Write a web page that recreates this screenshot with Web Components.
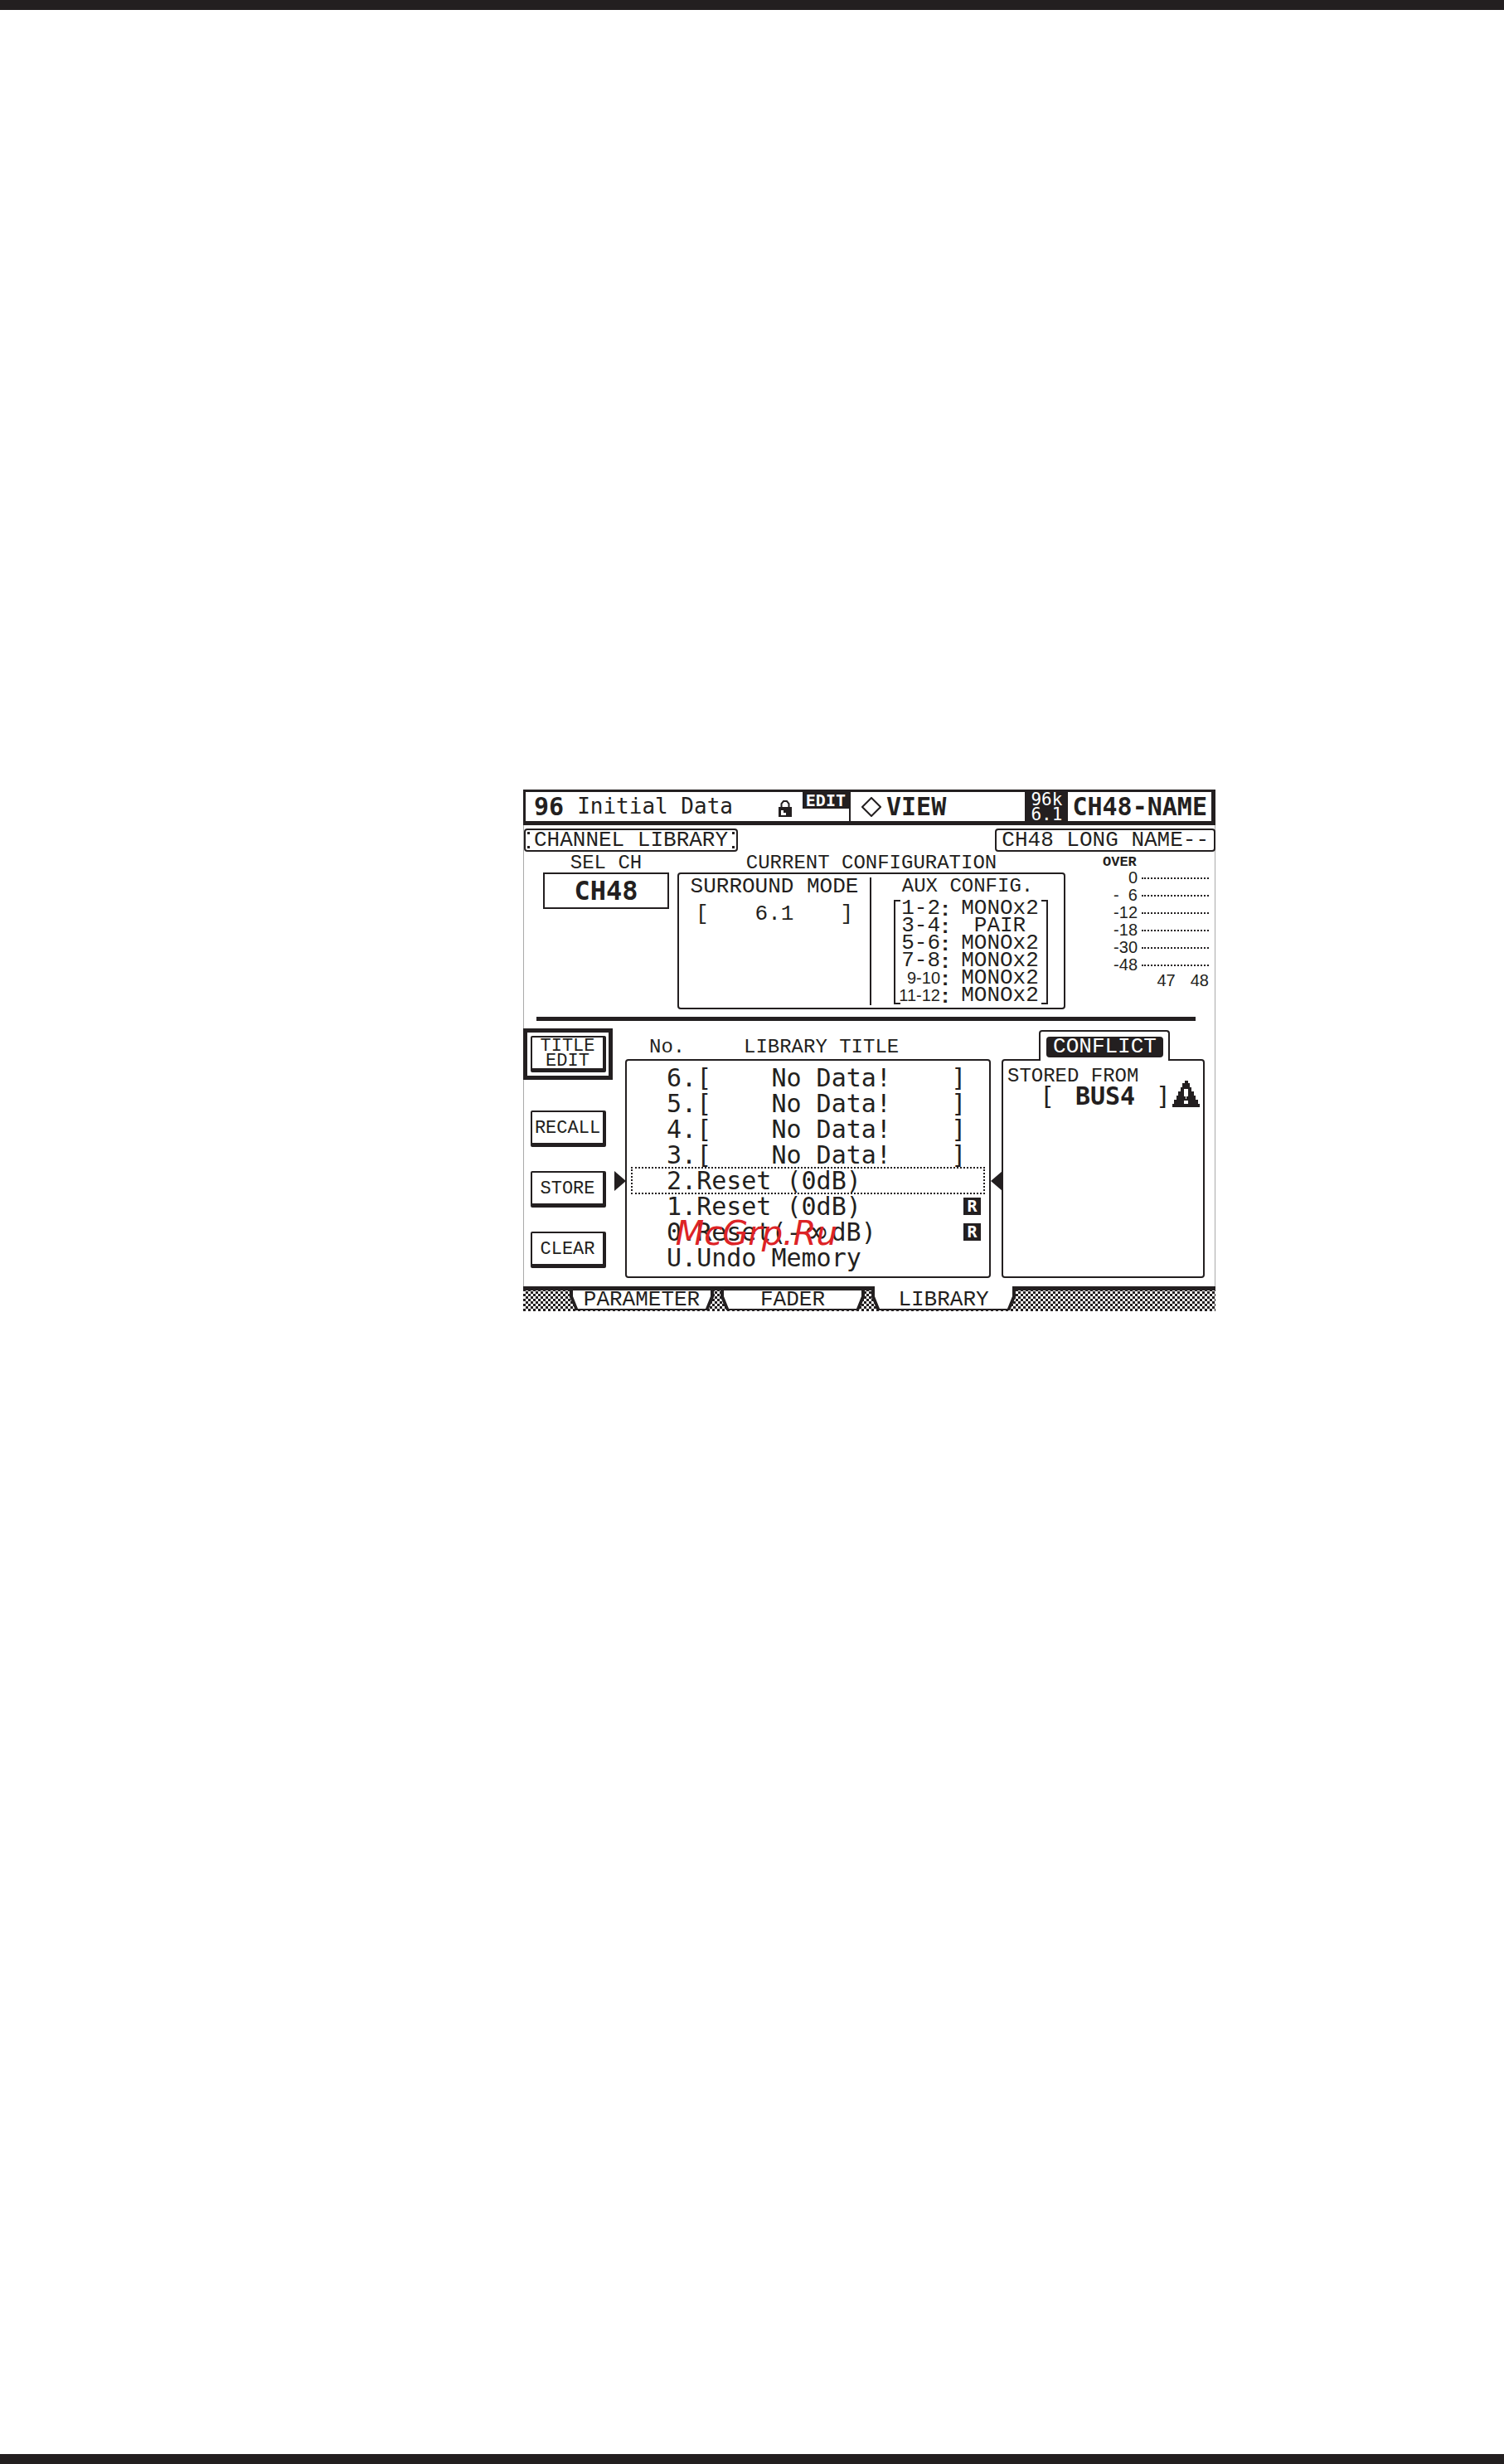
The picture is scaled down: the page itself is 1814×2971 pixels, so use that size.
<!DOCTYPE html>
<html lang="en">
<head>
<meta charset="utf-8">
<title>Channel Library</title>
<style>
html{--ink:#231f20;--paper:#fff;--lcd:"DejaVu Sans Mono",monospace;--label:"Liberation Mono",monospace}
body{margin:0;background:#fff;color:var(--ink);font-family:var(--lcd)}
</style>
</head>
<body>
<manual-page><lcd-screen></lcd-screen></manual-page>
<script>
function element(name, html) {
  const t = document.createElement('template');
  t.innerHTML = '<style>*{box-sizing:border-box}:host{display:block;box-sizing:border-box}</style>' + html;
  customElements.define(name, class extends HTMLElement {
    constructor() {
      super();
      this.attachShadow({mode: 'open'}).append(t.content.cloneNode(true));
    }
  });
}

element('manual-page', `
<style>
:host{display:grid;min-height:100vh;grid-template-columns:631fr 835fr 348fr;grid-template-rows:12px 940fr auto 1378fr 12px}
.rule{grid-column:1/-1;background:var(--ink)}
.top{grid-row:1}.bottom{grid-row:5}
main{grid-column:2;grid-row:3;min-width:0}
</style>
<div class="rule top"></div><main><slot></slot></main><div class="rule bottom"></div>`);

element('lcd-header', `
<style>
:host{display:flex;height:43px;border:solid var(--ink);border-width:3px 5px 5px 3px;line-height:35px;white-space:pre}
.scene{display:flex;flex:none;width:47.4%;border-right:2px solid var(--ink);padding-left:10px}
b{font-size:30px}
.name{font-size:26px;padding-left:16px;flex:1}
.lock{margin:9px 13px 0 0;width:16px;height:22px}
.edit{font-size:20px;font-weight:bold;line-height:20px;height:20px;background:var(--ink);color:var(--paper);padding:0 4px}
.view{flex:1;display:flex;padding-left:13px;align-items:center}
.view svg{width:24px;height:24px;margin-right:6px}
.rate{background:var(--ink);color:var(--paper);font-size:21px;line-height:18px;width:52px;text-align:center}
.ch{padding:0 5px}
</style>
<div class="scene"><b>96</b><span class="name">Initial Data</span>
<svg class="lock" viewBox="0 0 16 22"><path d="M3.500 9V5L6 2h4l2.500 3v4" fill="none" stroke="#231f20" stroke-width="2"/><path d="M0 9h16v12H0z" fill="#231f20"/><path d="M3 13h3v3h3v3H3z" fill="#fff"/></svg><span class="edit">EDIT</span></div>
<div class="view"><svg viewBox="0 0 24 24"><path d="M12 1L23 12L12 23L1 12z" fill="none" stroke="#231f20" stroke-width="2"/></svg><b>VIEW</b></div>
<div class="rate">96k<br>6.1</div><b class="ch">CH48-NAME</b>`);

element('name-tag', `
<style>
:host{border:2px solid var(--ink);border-radius:4px;height:28px;font:26px/24px var(--label);padding:0 4px;display:flex;gap:2px;white-space:pre}
:host([dotted]) i{width:3px;margin:2px 0;border:solid var(--ink);border-width:3px 0}
:host([dotted]){padding:0 2px;gap:5px}
</style><i></i><slot></slot><i></i>`);

element('aux-config', `
<style>
:host{position:relative;padding:0 4px;width:186px}
:host::before,:host::after{content:"";position:absolute;top:0;bottom:0;width:6px;border:2px solid var(--ink)}
:host::before{left:0;border-right:0}
:host::after{right:0;border-left:0}
table{border-collapse:collapse;width:100%;font:26px/21px var(--label)}
th,td{padding:0;height:21px;font-weight:normal;white-space:pre}
th{text-align:right;width:64px}
td{text-align:center;padding-left:6px}
.dense{font:20px/21px "Liberation Sans",sans-serif}
b{display:inline-block;width:12px;height:21px;vertical-align:top;text-align:center;font:bold 26px/21px "Liberation Sans",sans-serif}
</style>
<table>
<tr><th scope="row">1-2<b>:</b></th><td>MONOx2</td></tr>
<tr><th scope="row">3-4<b>:</b></th><td>PAIR</td></tr>
<tr><th scope="row">5-6<b>:</b></th><td>MONOx2</td></tr>
<tr><th scope="row">7-8<b>:</b></th><td>MONOx2</td></tr>
<tr><th scope="row" class="dense">9-10<b>:</b></th><td>MONOx2</td></tr>
<tr><th scope="row" class="dense">11-12<b>:</b></th><td>MONOx2</td></tr>
</table>`);

element('level-meter', `
<style>
:host{width:128px;font:20px/21px "Liberation Sans",sans-serif}
.over{font:bold 17px/20px var(--label);height:18px;width:42px}
.row{display:flex;align-items:center;height:21px;gap:5px;white-space:pre}
.row span{width:42px;text-align:right}
.row i{flex:1;border-top:2px dotted var(--ink);height:0}
.foot{display:flex;justify-content:flex-end;gap:18px;line-height:17px}
</style>
<div class="over">OVER</div>
<div class="row"><span>0</span><i></i></div><div class="row"><span>-  6</span><i></i></div><div class="row"><span>-12</span><i></i></div><div class="row"><span>-18</span><i></i></div><div class="row"><span>-30</span><i></i></div><div class="row"><span>-48</span><i></i></div>
<div class="foot"><span>47</span><span>48</span></div>`);

element('channel-config', `
<style>
:host{display:flex;padding:0 8px 0 24px;height:189px;font:24px/22px var(--label)}
.sel{width:152px;text-align:center}
.sel output{display:block;border:2px solid var(--ink);height:44px;font:bold 32px/40px var(--lcd)}
.cur{flex:1;margin:0 45px 0 10px;display:flex;flex-direction:column;text-align:center}
.box{border:2px solid var(--ink);border-radius:4px;flex:1;display:flex;padding:4px 0 3px;margin-bottom:2px;min-height:0}
.mode{width:50%;border-right:2px solid var(--ink)}
.wide{font-size:26px}
.value{display:flex;justify-content:space-between;padding:8px 20px;line-height:28px;font-size:26px}
.aux{flex:1}
.aux aux-config{margin:5px 19px 0 auto}
</style>
<div class="sel"><div>SEL CH</div><output>CH48</output></div>
<div class="cur"><div>CURRENT CONFIGURATION</div>
<div class="box"><div class="mode"><div class="wide">SURROUND MODE</div><div class="value"><span>[</span><span>6.1</span><span>]</span></div></div>
<div class="aux"><div>AUX CONFIG.</div><aux-config></aux-config></div></div></div>
<level-meter></level-meter>`);

element('lcd-button', `
<style>
:host([focused]){border:5px solid var(--ink);padding:4px 3px 4px 4px}
:host(:not([focused])){padding:0 8px 0 9px}
button{display:block;width:100%;height:44px;margin:0;border:2px solid var(--ink);border-width:2px 4px 5px 2px;border-radius:2px;background:var(--paper);color:var(--ink);font:22px/18px var(--label);padding:2px 0 0}
</style><button type="button"><slot></slot></button>`);

element('library-list', `
<style>
table,thead,tbody{display:block}
thead tr{display:flex;height:37px;padding:9px 0 0 29px;font:24px/28px var(--label)}
th{font-weight:normal;padding:0;text-align:left}
th:first-child{width:114px}
tbody{border:2px solid var(--ink);border-radius:4px;padding:5px 0 7px}
tbody tr{display:flex;position:relative;margin:0 6px;padding:0 4px 0 42px;height:31px;font:30px/31px var(--lcd);align-items:center;white-space:pre}
td{padding:0}
.t{flex:1}
.r{width:21px;height:21px;background:var(--ink);color:var(--paper);font:bold 20px/21px var(--lcd);text-align:center}
.on{outline:2px dotted var(--ink);outline-offset:-1px}
.on .p{position:absolute;top:4px;border:12px solid transparent;width:0;height:0}
.on .l{left:-21px;border-width:12px 0 12px 14px;border-left-color:var(--ink)}
.on .e{right:-22px;border-width:12px 14px 12px 0;border-right-color:var(--ink)}
.inf{display:inline-block;width:36px;text-align:center;font-family:"DejaVu Sans",sans-serif;font-size:38px;line-height:31px;vertical-align:top}
</style>
<table><thead><tr><th>No.</th><th>LIBRARY TITLE</th></tr></thead>
<tbody>
<tr><td>6.</td><td class="t">[    No Data!    ]</td></tr>
<tr><td>5.</td><td class="t">[    No Data!    ]</td></tr>
<tr><td>4.</td><td class="t">[    No Data!    ]</td></tr>
<tr><td>3.</td><td class="t">[    No Data!    ]</td></tr>
<tr class="on"><td>2.</td><td class="t">Reset (0dB)<i class="p l"></i><i class="p e"></i></td></tr>
<tr><td>1.</td><td class="t">Reset (0dB)</td><td class="r">R</td></tr>
<tr><td>0.</td><td class="t">Reset(-<span class="inf">∞</span>dB)</td><td class="r">R</td></tr>
<tr><td>U.</td><td class="t">Undo Memory</td></tr>
</tbody></table>`);

element('conflict-panel', `
<style>
:host{display:flex;flex-direction:column}
.tab{align-self:flex-start;width:158px;height:37px;margin:0 0 -2px 45px;border:2px solid var(--ink);border-bottom:0;border-radius:4px 4px 0 0;padding:6px 6px 0 7px;background:var(--paper);position:relative}
.tab span{display:block;background:var(--ink);color:var(--paper);border-radius:4px;font:26px/25px var(--label);text-align:center}
.body{flex:1;border:2px solid var(--ink);border-radius:4px;padding:8px 4px 0 5px;font:24px/22px var(--label)}
.from{display:flex;align-items:center;justify-content:flex-end;height:26px;font:30px/26px var(--lcd);gap:2px;padding-left:39px}
b{flex:1;text-align:center}
.from span{width:18px;text-align:center}
svg{width:33px;height:33px;margin:-8px 0 0}
</style>
<div class="tab"><span>CONFLICT</span></div>
<div class="body"><div>STORED FROM</div><div class="from"><span>[</span><b>BUS4</b><span>]</span>
<svg viewBox="0 0 33 33"><path d="M15 1h4v3h2v5h2v5h3v5h2v5h3v5h2v4H0v-4h2v-5h3v-5h2v-5h3V9h2V4h3z" fill="#231f20"/><path d="M14 11h5v9h-2v3h-1v-3h-2zM14 25h5v4h-5z" fill="#fff"/></svg></div></div>`);

element('page-tab', `
<style>
:host{position:relative;width:174px;height:30px}
svg{position:absolute;inset:0;width:100%;height:100%}
button{position:relative;display:block;width:100%;height:30px;border:0;background:none;padding:2px 0 0;font:26px/27px var(--label);color:var(--ink)}
:host([current]) .shut,:host(:not([current])) .open{display:none}
</style>
<svg viewBox="0 0 174 30" preserveAspectRatio="none"><path d="M0 0H174V13L167 29H7L0 13z" fill="#231f20"/><path class="shut" d="M4 5H170V12L164 27H10L4 12z" fill="#fff"/><path class="open" d="M4 0H170V12L164 27H10L4 12z" fill="#fff"/></svg>
<button type="button"><slot></slot></button>`);

element('page-tabs', `
<style>
:host{background:linear-gradient(var(--ink),var(--ink)) 0 0/100% 5px no-repeat,repeating-conic-gradient(var(--ink) 0 25%,#fff 0 50%) 0 0/6px 6px}
nav{display:flex;gap:8px;padding-left:56px}
</style>
<nav><page-tab>PARAMETER</page-tab><page-tab>FADER</page-tab><page-tab current>LIBRARY</page-tab></nav>`);

element('lcd-screen', `
<style>
:host{position:relative;box-shadow:inset 1px 0 #aaa,inset -1px 0 #aaa}
.names{display:flex;justify-content:space-between;padding:4px 0 3px 1px}
hr{margin:7px 24px 9px 16px;border:0;height:5px;background:var(--ink)}
.lower{display:grid;grid-template-columns:108px 456fr 258fr;padding-right:13px}
.keys{display:flex;flex-direction:column;gap:29px}
.keys lcd-button:first-child{margin-bottom:8px}
library-list{margin-left:15px}
conflict-panel{margin:2px 0 0 13px}
page-tabs{margin-top:10px}
.mark{position:absolute;left:22%;top:513px;color:#dd2326;font:italic 40px/44px "DejaVu Sans",sans-serif}
</style>
<lcd-header></lcd-header>
<div class="names"><name-tag dotted>CHANNEL LIBRARY</name-tag><name-tag>CH48 LONG NAME--</name-tag></div>
<channel-config></channel-config>
<hr>
<div class="lower"><div class="keys"><lcd-button focused>TITLE<br>EDIT</lcd-button><lcd-button>RECALL</lcd-button><lcd-button>STORE</lcd-button><lcd-button>CLEAR</lcd-button></div>
<library-list></library-list><conflict-panel></conflict-panel></div>
<page-tabs></page-tabs>
<div class="mark">McGrp.Ru</div>`);
</script>
</body>
</html>
